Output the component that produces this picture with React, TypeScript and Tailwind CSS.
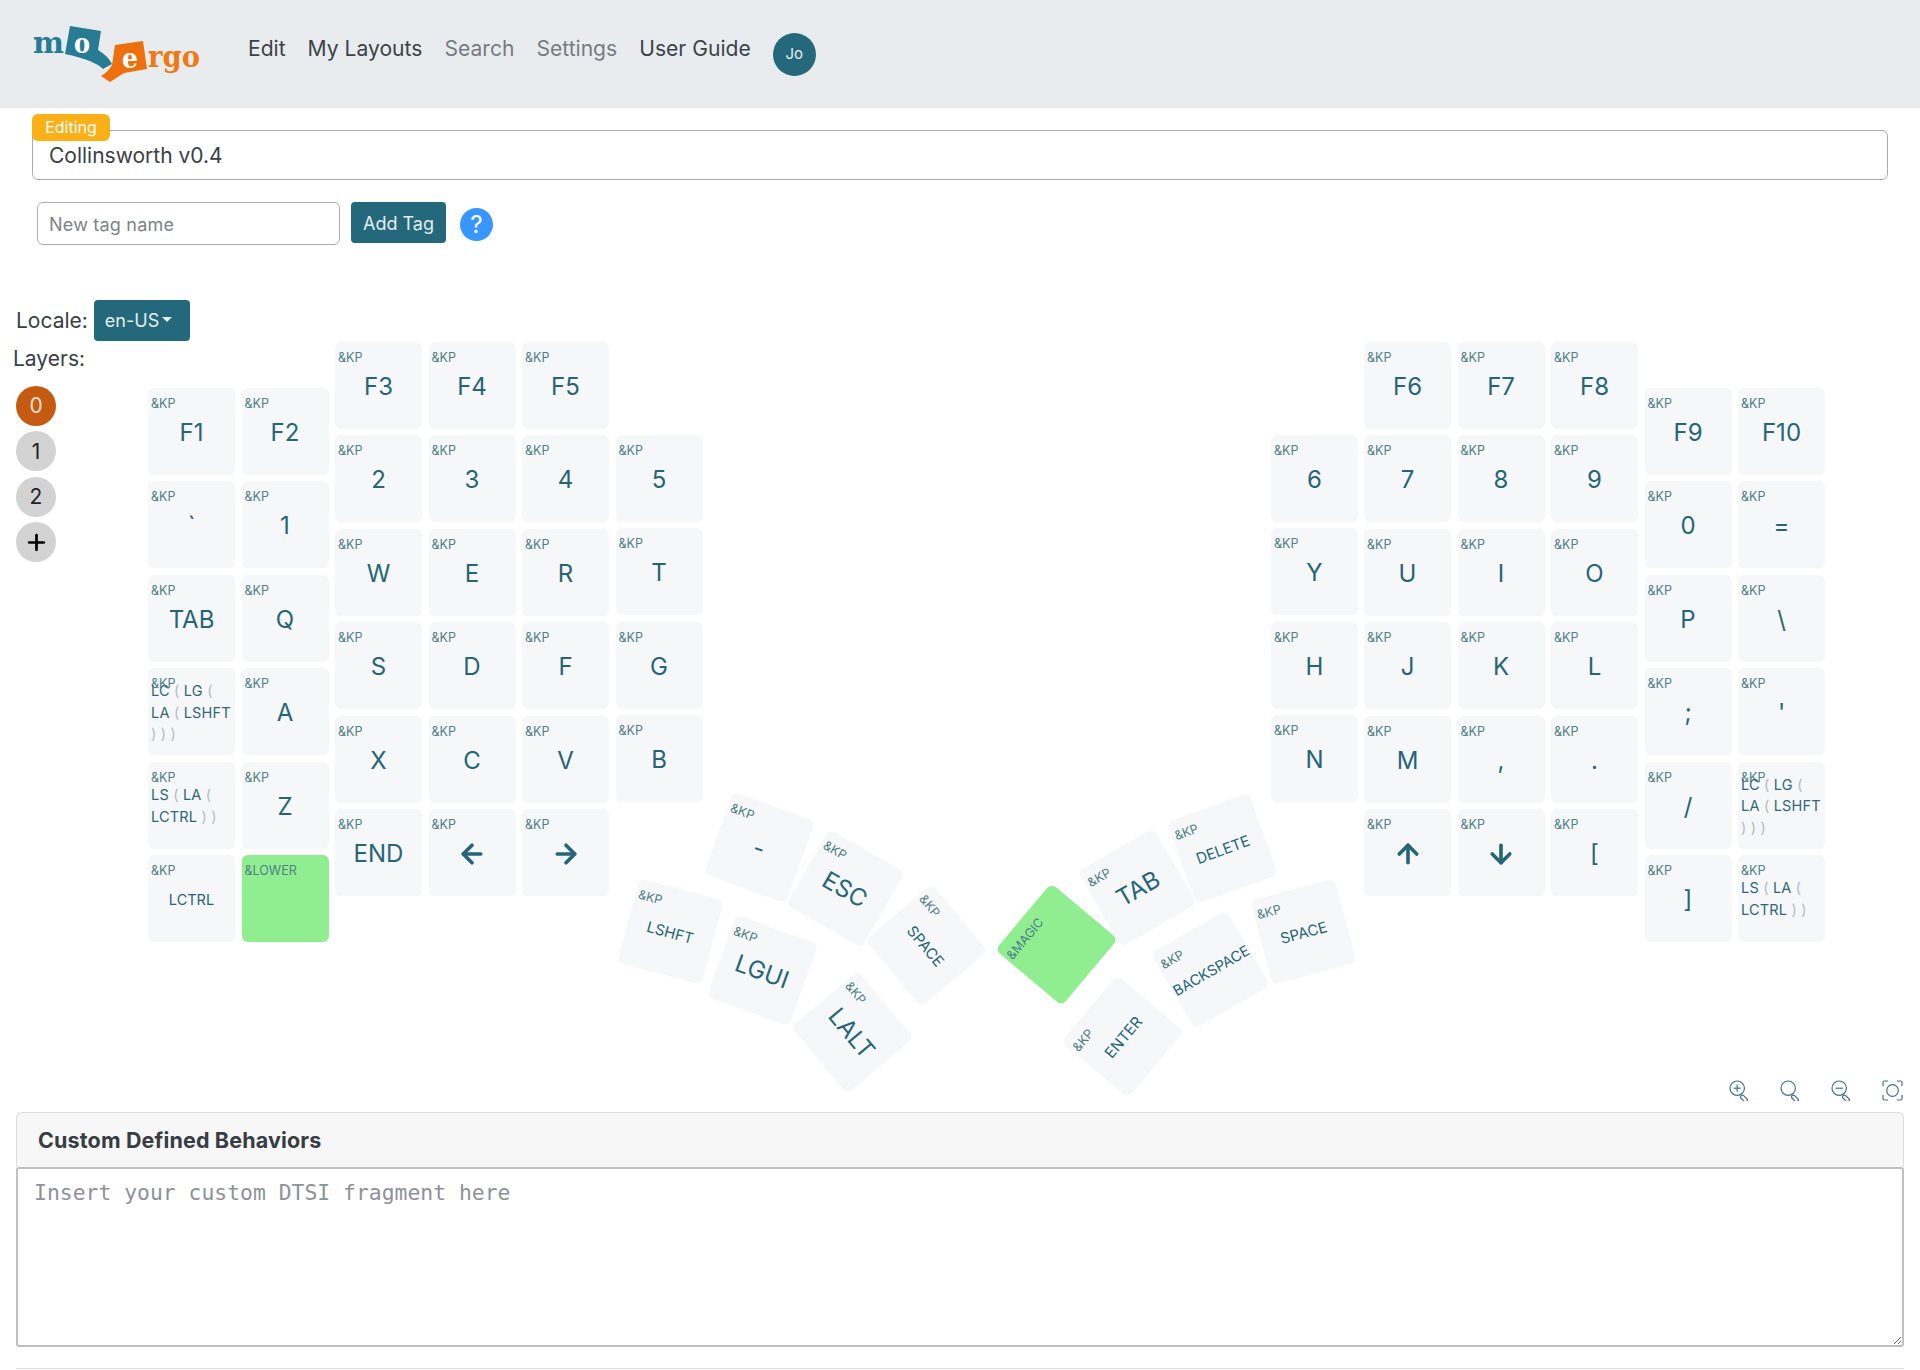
import React from "react";
import { ArrowLeft, ArrowRight, ArrowUp, ArrowDown, Plus } from "lucide-react";

const Paren = ({ children }: { children: React.ReactNode }) => <span className="text-[#b4bcc0]">{children}</span>;

const LcMulti = () => (
  <div className="absolute left-[3px] top-[12px] text-[14.5px] leading-[21.5px] tracking-[0.2px] text-[#2f6878] text-left">
    LC <Paren>(</Paren> LG <Paren>(</Paren>
    <br />
    LA <Paren>(</Paren> LSHFT
    <br />
    <Paren>) ) )</Paren>
  </div>
);
const LsMulti = () => (
  <div className="absolute left-[3px] top-[22px] text-[14.5px] leading-[22px] tracking-[0.2px] text-[#2f6878] text-left">
    LS <Paren>(</Paren> LA <Paren>(</Paren>
    <br />
    LCTRL <Paren>) )</Paren>
  </div>
);

type KeyDef = { l?: React.ReactNode; s?: number; b?: string; custom?: React.ReactNode; green?: boolean };

function Key({ def, x, y, rot }: { def: KeyDef; x: number; y: number; rot?: number }) {
  return (
    <div
      className={`absolute w-[87px] h-[87px] rounded-[6px] ${def.green ? "bg-[#90ee90]" : "bg-[#f6f7f8]"}`}
      style={{ left: x, top: y, transform: rot ? `rotate(${rot}deg)` : undefined }}
    >
      <div className="absolute left-[3px] top-[8px] text-[12.5px] leading-[15px] text-[#4f7f89]">{def.b ?? "&KP"}</div>
      {def.custom}
      {def.l !== undefined && (
        <div
          className="absolute inset-x-0 top-[24px] h-[42px] flex items-center justify-center text-[#256577] whitespace-nowrap"
          style={{ fontSize: def.s ?? 24 }}
        >
          {def.l}
        </div>
      )}
    </div>
  );
}

const t = (s: string, size?: number): KeyDef => ({ l: s, s: size });
const arrow = (I: typeof ArrowLeft): KeyDef => ({ l: <I size={30} strokeWidth={2.9} /> });
const lc: KeyDef = { custom: <LcMulti /> };
const ls: KeyDef = { custom: <LsMulti /> };

const PITCH = 93.4;
const columns: { x: number; y: number; keys: KeyDef[] }[] = [
  { x: 148, y: 388, keys: [t("F1"), t("`"), t("TAB"), lc, ls, t("LCTRL", 14.5)] },
  { x: 241.5, y: 388, keys: [t("F2"), t("1"), t("Q"), t("A"), t("Z"), { b: "&LOWER", green: true }] },
  { x: 335, y: 342, keys: [t("F3"), t("2"), t("W"), t("S"), t("X"), t("END")] },
  { x: 428.5, y: 342, keys: [t("F4"), t("3"), t("E"), t("D"), t("C"), arrow(ArrowLeft)] },
  { x: 522, y: 342, keys: [t("F5"), t("4"), t("R"), t("F"), t("V"), arrow(ArrowRight)] },
  { x: 615.5, y: 435, keys: [t("5"), t("T"), t("G"), t("B")] },
  { x: 1271, y: 435, keys: [t("6"), t("Y"), t("H"), t("N")] },
  { x: 1364, y: 342, keys: [t("F6"), t("7"), t("U"), t("J"), t("M"), arrow(ArrowUp)] },
  { x: 1457.5, y: 342, keys: [t("F7"), t("8"), t("I"), t("K"), t(","), arrow(ArrowDown)] },
  { x: 1551, y: 342, keys: [t("F8"), t("9"), t("O"), t("L"), t("."), t("[")] },
  { x: 1644.5, y: 388, keys: [t("F9"), t("0"), t("P"), t(";"), t("/"), t("]")] },
  { x: 1738, y: 388, keys: [t("F10"), t("="), t("\\"), t("'"), lc, ls] },
];

const thumbs: { def: KeyDef; cx: number; cy: number; rot: number }[] = [
  { def: t("-"), cx: 759, cy: 847, rot: 20 },
  { def: t("LSHFT", 15), cx: 670, cy: 931, rot: 15 },
  { def: t("LGUI"), cx: 762, cy: 970, rot: 20 },
  { def: t("ESC"), cx: 845, cy: 888, rot: 30 },
  { def: t("SPACE", 15), cx: 926, cy: 945, rot: 50 },
  { def: t("LALT"), cx: 852, cy: 1032, rot: 50 },
  { def: { b: "&MAGIC", green: true }, cx: 1056, cy: 944, rot: -50 },
  { def: t("TAB"), cx: 1137, cy: 887, rot: -30 },
  { def: t("DELETE", 15), cx: 1222, cy: 848, rot: -20 },
  { def: t("SPACE", 15), cx: 1303, cy: 931, rot: -15 },
  { def: t("BACKSPACE", 14.5), cx: 1210, cy: 969, rot: -30 },
  { def: t("ENTER", 15), cx: 1122, cy: 1036, rot: -50 },
];

const CANVAS_Y = 245;

function Magnifier({ mode }: { mode: "in" | "plain" | "out" }) {
  return (
    <svg width="21" height="21" viewBox="0 0 21 21" fill="none" stroke="#3d7482" strokeWidth="1.2">
      <circle cx="8.2" cy="8.2" r="7.2" />
      <rect x="13.4" y="14.4" width="8" height="3.6" rx="1.8" transform="rotate(45 13.4 14.4)" />
      {mode !== "plain" && <path d="M4.6 8.2h7.2" />}
      {mode === "in" && <path d="M8.2 4.6v7.2" />}
    </svg>
  );
}

function Logo() {
  return (
    <svg viewBox="0 0 240 110" className="absolute left-0 top-0 w-[240px] h-[110px]">
      <path d="M70 26 L101 31 L98 50 Q108 56 112 64 L103 69 Q94 60 65 54 Z" fill="#277b92" />
      <path d="M115 45 L143 41 L147 69 L124 73 L110 82 L101 76 Q108 72 112 65 Z" fill="#ee6f0c" />
      <text x="33" y="53" fontFamily="'DejaVu Serif', serif" fontWeight="700" fontSize="29" fill="#277b92" textLength="31" lengthAdjust="spacingAndGlyphs">m</text>
      <text x="74" y="53" fontFamily="'DejaVu Serif', serif" fontWeight="700" fontSize="28" fill="#ffffff" textLength="16" lengthAdjust="spacingAndGlyphs">o</text>
      <text x="122" y="68" fontFamily="'DejaVu Serif', serif" fontWeight="700" fontSize="28" fill="#ffffff" textLength="16" lengthAdjust="spacingAndGlyphs">e</text>
      <text x="148" y="67" fontFamily="'DejaVu Serif', serif" fontWeight="700" fontSize="29" fill="#ee7a16" textLength="52" lengthAdjust="spacingAndGlyphs">rgo</text>
    </svg>
  );
}

export default function App() {
  return (
    <div className="relative w-[1920px] h-[1370px] overflow-hidden bg-white font-['Inter',sans-serif] text-[#212529]">
      <header className="relative h-[108px] bg-[#e9ecef] flex items-start pl-[248px]">
        <Logo />
        <nav className="flex items-center gap-[22px] pt-[35px] text-[21.1px] leading-[28px]">
          <span className="text-[#3c4349]">Edit</span>
          <span className="text-[#3c4349]">My Layouts</span>
          <span className="text-[#767c82]">Search</span>
          <span className="text-[#767c82]">Settings</span>
          <span className="text-[#3c4349]">User Guide</span>
        </nav>
        <div className="ml-[22px] mt-[33px] w-[43px] h-[43px] rounded-full bg-[#24697b] text-[#e6eef0] text-[15px] flex items-center justify-center">Jo</div>
      </header>

      <div className="relative mx-[32px] mt-[22px] h-[50px] border border-[#a9adb1] rounded-[6px] flex items-center pl-[16px] pt-[1px] text-[21px] text-[#3a4046]">
        Collinsworth v0.4
        <span className="absolute left-[-1px] top-[-17px] h-[27px] w-[78px] rounded-[6px] bg-[#fbb017] text-white text-[16px] pb-[2px] flex items-center justify-center">Editing</span>
      </div>

      <div className="flex items-start mt-[22px] ml-[37px] h-[43px]">
        <input
          placeholder="New tag name"
          className="w-[303px] h-[43px] border border-[#a9adb1] rounded-[6px] pl-[11px] pt-[1px] text-[18px] tracking-[0.2px] placeholder:text-[#7c8388] outline-none"
        />
        <button className="ml-[11px] w-[95px] h-[41px] rounded-[4px] bg-[#24697b] text-[#e6eef0] text-[18px] pt-[1px]">Add Tag</button>
        <span className="ml-[14px] mt-[6px] w-[33px] h-[33px] rounded-full bg-[#3796ff] text-white text-[24px] flex items-center justify-center">?</span>
      </div>

      <div className="relative h-[835px]">
        <div className="absolute left-0 top-0 flex flex-col">
          <div className="flex items-center ml-[16px] mt-[55px] h-[41px]">
            <span className="text-[21px] text-[#3a4046]">Locale:</span>
            <button className="ml-[6px] w-[96px] h-[41px] rounded-[4px] bg-[#24697b] text-[#e6eef0] text-[18px] flex items-center pl-[11px] gap-[3px]">
              en-US
              <span className="w-0 h-0 border-x-[5px] border-x-transparent border-t-[5px] border-t-[#e6eef0] mb-[2px]" />
            </button>
          </div>
          <div className="ml-[13px] mt-[3px] text-[21px] leading-[30px] text-[#3a4046]">Layers:</div>
          <div className="ml-[16px] mt-[12px] flex flex-col gap-[5.4px]">
            <span className="w-[40px] h-[40px] rounded-full bg-[#c55a11] text-[#f2e0d2] text-[21px] flex items-center justify-center">0</span>
            <span className="w-[40px] h-[40px] rounded-full bg-[#d3d3d3] text-[#222] text-[21px] flex items-center justify-center">1</span>
            <span className="w-[40px] h-[40px] rounded-full bg-[#d3d3d3] text-[#222] text-[21px] flex items-center justify-center">2</span>
            <span className="w-[40px] h-[40px] rounded-full bg-[#d3d3d3] text-black flex items-center justify-center"><Plus size={25} strokeWidth={2.6} /></span>
          </div>
        </div>
        {columns.map((c, i) =>
          c.keys.map((k, j) => <Key key={`${i}-${j}`} def={k} x={c.x} y={c.y + j * PITCH - CANVAS_Y} />)
        )}
        {thumbs.map((k, i) => (
          <Key key={`t${i}`} def={k.def} x={k.cx - 43.5} y={k.cy - 43.5 - CANVAS_Y} rot={k.rot} />
        ))}
      </div>

      <div className="flex justify-end gap-[30px] pr-[17px] h-[20px]">
        <Magnifier mode="in" />
        <Magnifier mode="plain" />
        <Magnifier mode="out" />
        <svg width="21" height="21" viewBox="0 0 21 21" fill="none" stroke="#3d7482" strokeWidth="1.2">
          <path d="M1 6V2.500A1.500 1.500 0 0 1 2.500 1H6M15 1h3.500A1.500 1.500 0 0 1 20 2.500V6M20 15v3.500a1.500 1.500 0 0 1-1.500 1.500H15M6 20H2.500A1.500 1.500 0 0 1 1 18.500V15" />
          <circle cx="10.500" cy="10.500" r="5.800" />
        </svg>
      </div>

      <section className="mx-[16px] mt-[12px] rounded-t-[6px]">
        <div className="h-[55px] bg-[#f7f7f7] border border-[#dcdcdc] border-b-0 rounded-t-[6px] flex items-center pl-[21px] pt-[1px] text-[21.5px] font-bold text-[#373d44] tracking-[0.15px]">
          Custom Defined Behaviors
        </div>
        <textarea
          placeholder="Insert your custom DTSI fragment here"
          className="block w-full h-[180px] border-2 border-[#bfbfbf] rounded-[3px] px-[16px] pt-[10px] font-['DejaVu_Sans_Mono',monospace] text-[21.4px] leading-[28px] placeholder:text-[#8c9297] outline-none"
        />
      </section>
      <div className="mx-[16px] mt-[21px] border-t border-[#dcdcdc]" />
    </div>
  );
}
